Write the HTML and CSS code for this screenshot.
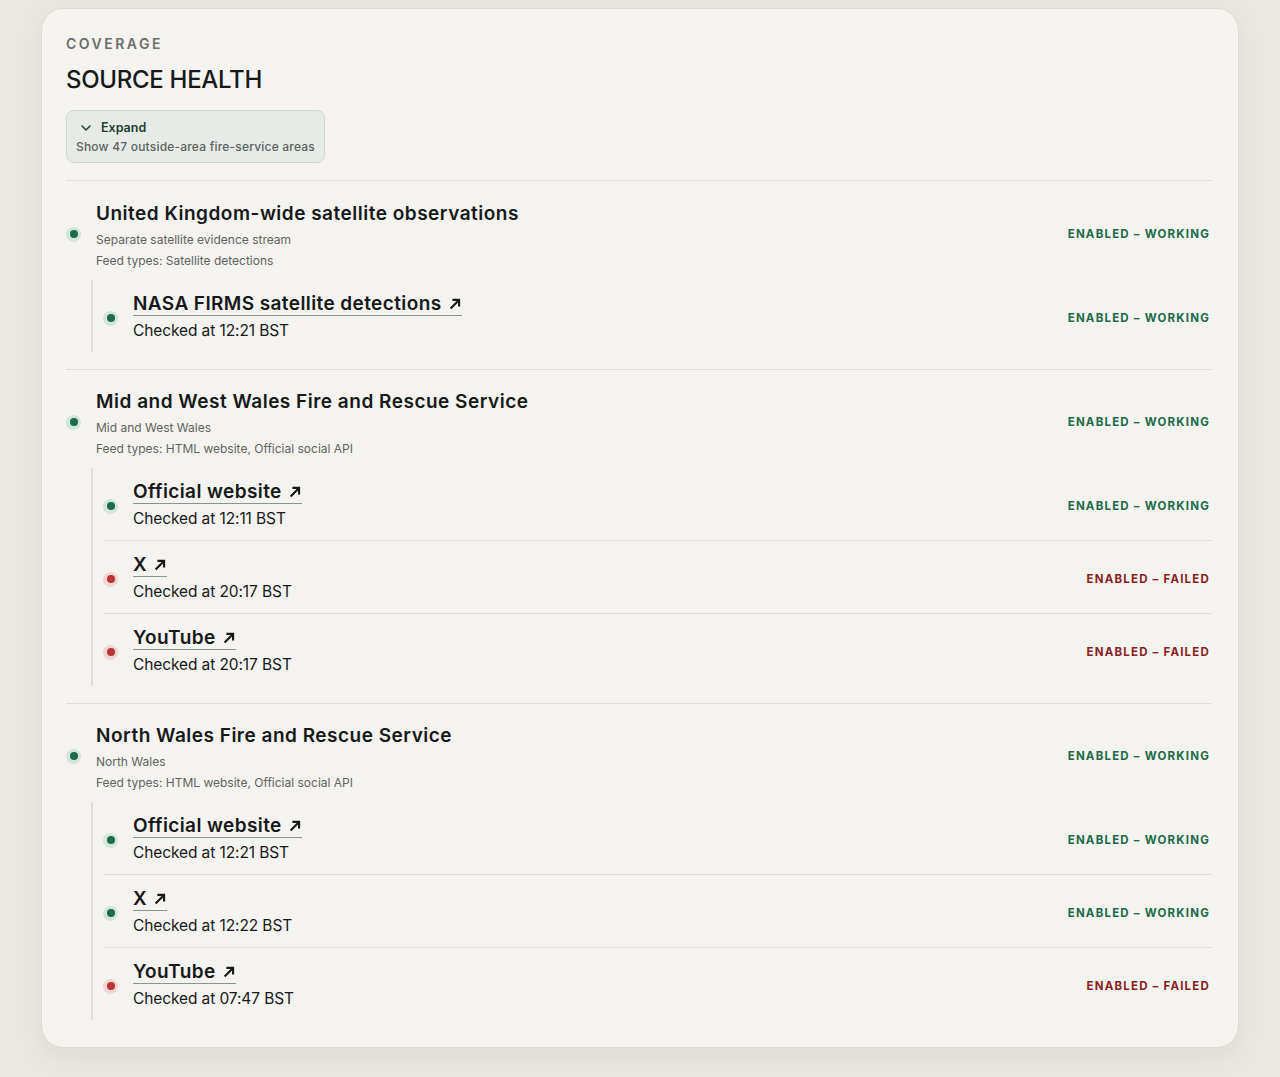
FILE: index.html
```html
<!DOCTYPE html>
<html lang="en">
    <head>
        <meta charset="utf-8" />
        <title>Source health</title>
        <link rel="stylesheet" href="styles.css">
    </head>
    <body>
        <main class="card">
            <p class="eyebrow">Coverage</p>
            <h2 class="title">Source Health</h2>

            <button class="expand">
                <span class="expand-head">
                    <svg width="12" height="12" viewBox="0 0 12 12"><path d="M2 4l4 4 4-4" fill="none" stroke="currentColor" stroke-width="1.5" stroke-linecap="round" stroke-linejoin="round"/></svg>
                    Expand
                </span>
                <span class="expand-sub">Show 47 outside-area fire-service areas</span>
            </button>

            <section class="group">
                <div class="group-head">
                    <span class="dot ok"></span>
                    <div class="group-info">
                        <h3>United Kingdom-wide satellite observations</h3>
                        <p>Separate satellite evidence stream</p>
                        <p>Feed types: Satellite detections</p>
                    </div>
                    <span class="status ok">Enabled – Working</span>
                </div>
                <ul class="feeds">
                    <li class="feed">
                        <span class="dot ok"></span>
                        <div class="feed-info">
                            <a href="#">NASA FIRMS satellite detections <svg class="arrow" viewBox="0 0 12 12"><path d="M2.2 9.8L9.3 2.7M3.8 2.5h5.7v5.7" fill="none" stroke="currentColor" stroke-width="1.8"/></svg></a>
                            <span class="checked">Checked at 12:21 BST</span>
                        </div>
                        <span class="status ok">Enabled – Working</span>
                    </li>
                </ul>
            </section>

            <section class="group">
                <div class="group-head">
                    <span class="dot ok"></span>
                    <div class="group-info">
                        <h3>Mid and West Wales Fire and Rescue Service</h3>
                        <p>Mid and West Wales</p>
                        <p>Feed types: HTML website, Official social API</p>
                    </div>
                    <span class="status ok">Enabled – Working</span>
                </div>
                <ul class="feeds">
                    <li class="feed">
                        <span class="dot ok"></span>
                        <div class="feed-info">
                            <a href="#">Official website <svg class="arrow" viewBox="0 0 12 12"><path d="M2.2 9.8L9.3 2.7M3.8 2.5h5.7v5.7" fill="none" stroke="currentColor" stroke-width="1.8"/></svg></a>
                            <span class="checked">Checked at 12:11 BST</span>
                        </div>
                        <span class="status ok">Enabled – Working</span>
                    </li>
                    <li class="feed">
                        <span class="dot bad"></span>
                        <div class="feed-info">
                            <a href="#">X <svg class="arrow" viewBox="0 0 12 12"><path d="M2.2 9.8L9.3 2.7M3.8 2.5h5.7v5.7" fill="none" stroke="currentColor" stroke-width="1.8"/></svg></a>
                            <span class="checked">Checked at 20:17 BST</span>
                        </div>
                        <span class="status bad">Enabled – Failed</span>
                    </li>
                    <li class="feed">
                        <span class="dot bad"></span>
                        <div class="feed-info">
                            <a href="#">YouTube <svg class="arrow" viewBox="0 0 12 12"><path d="M2.2 9.8L9.3 2.7M3.8 2.5h5.7v5.7" fill="none" stroke="currentColor" stroke-width="1.8"/></svg></a>
                            <span class="checked">Checked at 20:17 BST</span>
                        </div>
                        <span class="status bad">Enabled – Failed</span>
                    </li>
                </ul>
            </section>

            <section class="group">
                <div class="group-head">
                    <span class="dot ok"></span>
                    <div class="group-info">
                        <h3>North Wales Fire and Rescue Service</h3>
                        <p>North Wales</p>
                        <p>Feed types: HTML website, Official social API</p>
                    </div>
                    <span class="status ok">Enabled – Working</span>
                </div>
                <ul class="feeds">
                    <li class="feed">
                        <span class="dot ok"></span>
                        <div class="feed-info">
                            <a href="#">Official website <svg class="arrow" viewBox="0 0 12 12"><path d="M2.2 9.8L9.3 2.7M3.8 2.5h5.7v5.7" fill="none" stroke="currentColor" stroke-width="1.8"/></svg></a>
                            <span class="checked">Checked at 12:21 BST</span>
                        </div>
                        <span class="status ok">Enabled – Working</span>
                    </li>
                    <li class="feed">
                        <span class="dot ok"></span>
                        <div class="feed-info">
                            <a href="#">X <svg class="arrow" viewBox="0 0 12 12"><path d="M2.2 9.8L9.3 2.7M3.8 2.5h5.7v5.7" fill="none" stroke="currentColor" stroke-width="1.8"/></svg></a>
                            <span class="checked">Checked at 12:22 BST</span>
                        </div>
                        <span class="status ok">Enabled – Working</span>
                    </li>
                    <li class="feed">
                        <span class="dot bad"></span>
                        <div class="feed-info">
                            <a href="#">YouTube <svg class="arrow" viewBox="0 0 12 12"><path d="M2.2 9.8L9.3 2.7M3.8 2.5h5.7v5.7" fill="none" stroke="currentColor" stroke-width="1.8"/></svg></a>
                            <span class="checked">Checked at 07:47 BST</span>
                        </div>
                        <span class="status bad">Enabled – Failed</span>
                    </li>
                </ul>
            </section>
        </main>
    </body>
</html>
```

FILE: styles.css
```css
:root {
    --ok: #1d6a48;
    --ok-halo: #d3e4d9;
    --bad: #b93434;
    --bad-halo: #f0d6d3;
    --bad-text: #8b1e22;
    --ink: #16191a;
    --muted: #5f6461;
    --line: #dfddd7;
}

* {
    margin: 0;
    padding: 0;
    box-sizing: border-box;
    list-style: none;
}

body {
    background: #eae8e1;
    font-family: "Inter", "Liberation Sans", sans-serif;
    color: var(--ink);
    padding: 8px 0 30px;
}

.card {
    width: 1198px;
    margin: 0 auto;
    padding: 26px 26px 27px 24px;
    background: #f4f3ef;
    border: 1px solid #dcdad3;
    border-radius: 22px;
    box-shadow: 0 8px 24px rgba(80, 75, 60, 0.08);
}

.eyebrow {
    font-size: 14px;
    font-weight: 600;
    letter-spacing: 2.5px;
    text-transform: uppercase;
    color: #6b6f6c;
    line-height: 18px;
}

.title {
    margin-top: 12px;
    font-size: 24px;
    font-weight: 500;
    letter-spacing: -0.3px;
    text-transform: uppercase;
    line-height: 30px;
}

.expand {
    display: flex;
    flex-direction: column;
    align-items: flex-start;
    gap: 4px;
    margin-top: 15px;
    padding: 9px 9px 8px;
    background: #e7ebe8;
    border: 1px solid #cfd6d2;
    border-radius: 8px;
    font-family: inherit;
    cursor: pointer;
}

.expand-head {
    display: flex;
    align-items: center;
    gap: 9px;
    padding-left: 4px;
    font-size: 12.5px;
    font-weight: 600;
    color: #1d3d30;
}

.expand-sub {
    font-size: 12px;
    font-weight: 500;
    letter-spacing: 0.2px;
    color: #5c625f;
}

.group {
    border-top: 1px solid var(--line);
    margin-top: 17px;
    padding-top: 20px;
}

.expand + .group {
    margin-top: 17px;
    padding-top: 21px;
}

.group-head {
    display: flex;
    align-items: center;
    gap: 15px;
}

.group-head .dot,
.group-head .status {
    margin-bottom: 5px;
}

.group-info {
    flex: 1;
}

.group-info h3 {
    font-size: 19px;
    font-weight: 600;
    letter-spacing: 0.5px;
    line-height: 24px;
    margin-bottom: 3px;
}

.group-info p {
    font-size: 12px;
    color: var(--muted);
    line-height: 21px;
}

.dot {
    width: 15px;
    height: 15px;
    flex: none;
    border-radius: 50%;
    position: relative;
    background: var(--ok-halo);
}

.dot::after {
    content: '';
    position: absolute;
    top: 3.5px;
    left: 3.5px;
    width: 8px;
    height: 8px;
    border-radius: 50%;
    background: var(--ok);
}

.dot.bad {
    background: var(--bad-halo);
}

.dot.bad::after {
    background: var(--bad);
}

.status {
    font-size: 11.5px;
    font-weight: 700;
    letter-spacing: 1.2px;
    text-transform: uppercase;
    padding-right: 2px;
}

.status.ok {
    color: var(--ok);
}

.status.bad {
    color: var(--bad-text);
}

.feeds {
    margin: 9px 0 0 25px;
    border-left: 2px solid var(--line);
    padding-left: 10px;
}

.feed {
    display: flex;
    align-items: center;
    gap: 15px;
    padding: 13px 0 9px;
    border-top: 1px solid var(--line);
}

.feed:first-child {
    border-top: none;
}

.feed-info {
    flex: 1;
    display: flex;
    flex-direction: column;
    align-items: flex-start;
}

.feed-info a {
    display: inline-flex;
    align-items: center;
    gap: 6px;
    font-size: 19px;
    font-weight: 600;
    letter-spacing: 0.4px;
    color: var(--ink);
    text-decoration: none;
    border-bottom: 1.5px solid #7f9a8c;
    line-height: 22px;
}

.arrow {
    width: 14px;
    height: 14px;
}

.checked {
    font-size: 15.5px;
    letter-spacing: -0.1px;
    line-height: 24px;
    margin-top: 3px;
}
```
